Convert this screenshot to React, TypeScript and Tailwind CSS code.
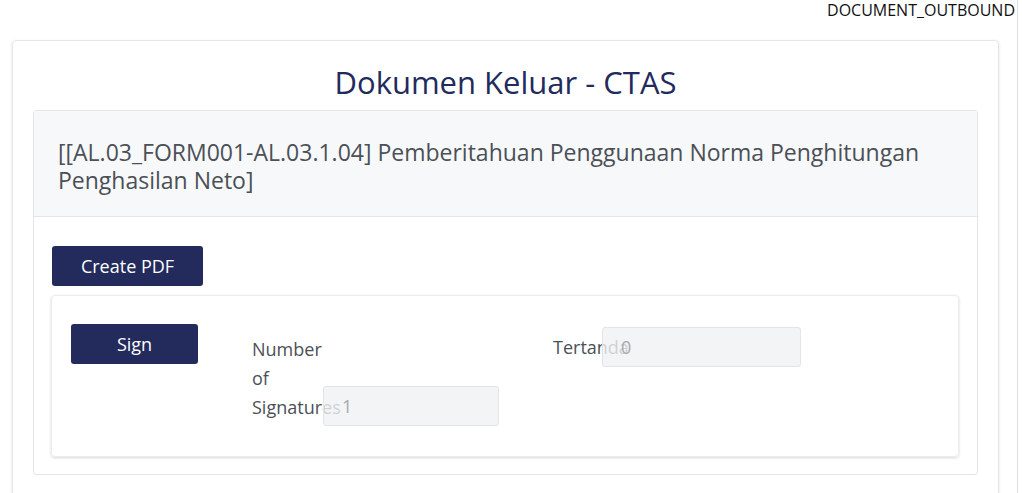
import React from 'react';

const FONT = 'font-["Open_Sans","Noto_Sans",sans-serif]';

export default function App() {
  return (
    <div className={`${FONT} min-h-[493px] w-[1018px] border-r border-[#dcdcdc] bg-white`}>
      {/* top label */}
      <div className="flex justify-end pr-[2px] text-[16px] leading-[20px] text-[#111]">DOCUMENT_OUTBOUND</div>

      {/* outer card */}
      <div className="ml-[12px] mr-[18px] mt-[20px] rounded-[4px] border border-[#e6e6e6] px-[20px] pb-[20px] shadow-[0_1px_3px_rgba(0,0,0,0.12)]">
        <h1 className="pt-[20px] pb-[7px] text-center text-[31px] leading-[42px] text-[#222b5c]">Dokumen Keluar - CTAS</h1>

        {/* inner card */}
        <div className="rounded-[3px] border border-[#e3e5e8]">
          <div className="border-b border-[#e3e5e8] bg-[#f7f8fa] px-[24px] pt-[27px] pb-[22px] text-[23px] leading-[28px] text-[#4b5056]">
            [[AL.03_FORM001-AL.03.1.04] Pemberitahuan Penggunaan Norma Penghitungan Penghasilan Neto]
          </div>

          <div className="px-[18px] pt-[29px] pb-[17px]">
            <button className="h-[40px] w-[151px] rounded-[3px] bg-[#222b5c] text-[18px] text-white">Create PDF</button>

            {/* signature card */}
            <div className="-ml-[1px] mt-[9px] flex items-start rounded-[4px] border border-[#ececec] px-[19px] pt-[28px] pb-[34px] shadow-[0_1px_3px_rgba(0,0,0,0.16)]">
              <button className="h-[40px] w-[127px] rounded-[3px] bg-[#222b5c] text-[18px] text-white">Sign</button>

              {/* number of signatures */}
              <div className="ml-[54px] mt-[11px] flex w-[247px] items-end">
                <div className="w-[71px] shrink-0 text-[18px] leading-[29px] text-[#4b5056]">Number of Signatures</div>
                <div className="relative z-10 mb-[-4px] flex h-[40px] w-[176px] items-center rounded-[3px] border border-[#e2e4e7] bg-[#eff1f3]/80 px-[18px] text-[18px] text-[#a8abaf]">1</div>
              </div>

              {/* tertanda */}
              <div className="ml-[54px] mt-[3px] flex w-[248px] items-center">
                <div className="w-[49px] shrink-0 whitespace-nowrap text-[18px] leading-[29px] text-[#4b5056]">Tertanda</div>
                <div className="relative z-10 flex h-[40px] w-[199px] items-center rounded-[3px] border border-[#e2e4e7] bg-[#eff1f3]/80 px-[18px] text-[18px] text-[#a8abaf]">0</div>
              </div>
            </div>
          </div>
        </div>
      </div>
    </div>
  );
}
